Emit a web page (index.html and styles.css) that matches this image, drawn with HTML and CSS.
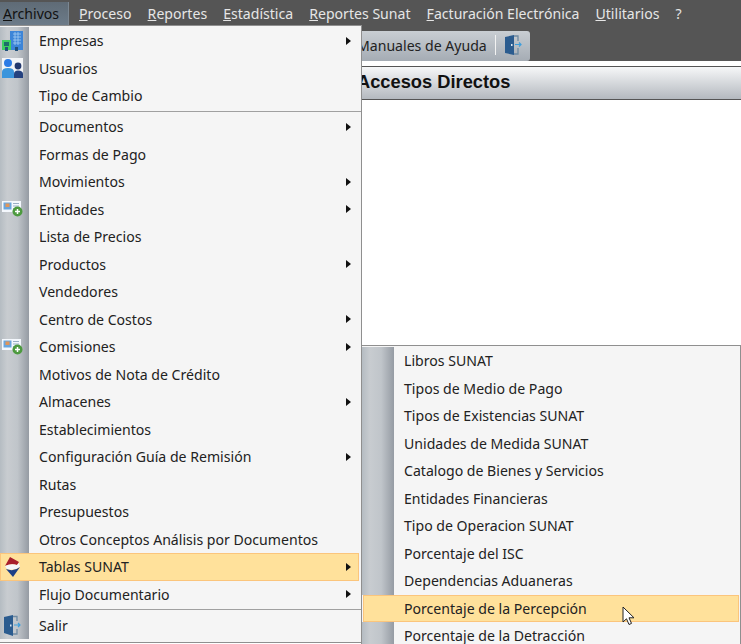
FILE: index.html
```html
<!DOCTYPE html>
<html lang="es">
<head>
    <meta charset="UTF-8">
    <meta name="viewport" content="width=device-width, initial-scale=1.0">
    <title>Accesos Directos</title>
    <link rel="stylesheet" href="styles.css">
</head>
<body>
    <div class="window">
        <nav class="menubar">
            <span class="menubar-item active"><u>A</u>rchivos</span>
            <span class="menubar-item"><u>P</u>roceso</span>
            <span class="menubar-item"><u>R</u>eportes</span>
            <span class="menubar-item"><u>E</u>stadística</span>
            <span class="menubar-item"><u>R</u>eportes Sunat</span>
            <span class="menubar-item"><u>F</u>acturación Electrónica</span>
            <span class="menubar-item"><u>U</u>tilitarios</span>
            <span class="menubar-item">?</span>
        </nav>

        <div class="toolbar">
            <div class="tool-tab">
                <span>Manuales de Ayuda</span>
                <span class="tool-sep"></span>
                <svg class="door" width="18" height="22" viewBox="0 0 18 22">
                    <path d="M1 3 L10 1 V21 L1 19 Z" fill="#2b5c8f"/>
                    <path d="M10 2 H14 V7 M14 14 V20 H10" fill="none" stroke="#6f8ba3" stroke-width="1.3"/>
                    <path d="M11 10.5 H17 M15 8.5 L17 10.5 L15 12.5" fill="none" stroke="#3e9fdc" stroke-width="1.2"/>
                    <rect x="7" y="10" width="1.5" height="2" fill="#dce8f2"/>
                </svg>
            </div>
        </div>

        <section class="panel">
            <h2 class="panel-title">Accesos Directos</h2>
            <div class="panel-body"></div>
        </section>

        <!-- menu Archivos -->
        <div class="menu menu-main">
            <div class="menu-row">
                <span class="menu-icon">
                    <svg width="21" height="20" viewBox="0 0 21 20">
                        <rect x="8" y="0" width="13" height="19" fill="#3d85d8"/>
                        <path d="M11 3 H19 M11 6 H19 M11 9 H19 M11 12 H19 M13 1 V14 M16 1 V14" stroke="#a6cdf2" stroke-width="0.8"/>
                        <rect x="0" y="9" width="9" height="10" fill="#3fd062"/>
                        <rect x="2" y="11" width="5" height="4" fill="#1c6e6a"/>
                        <rect x="3" y="16" width="3" height="4" fill="#22507a"/>
                        <rect x="13" y="16" width="3" height="4" fill="#22507a"/>
                    </svg>
                </span>
                <span class="menu-label">Empresas</span><span class="arrow"></span>
            </div>
            <div class="menu-row">
                <span class="menu-icon">
                    <svg width="21" height="20" viewBox="0 0 21 20">
                        <rect x="0" y="0" width="21" height="20" fill="#f2f4f7"/>
                        <circle cx="6" cy="5" r="4" fill="#2c7be5"/>
                        <path d="M0 20 V14 Q0 10 6 10 Q12 10 12 14 V20 Z" fill="#3b95dc"/>
                        <circle cx="16" cy="8" r="3.4" fill="#22386e"/>
                        <path d="M12 20 V16 Q12 12.5 16 12.5 Q21 12.5 21 16 V20 Z" fill="#25427f"/>
                    </svg>
                </span>
                <span class="menu-label">Usuarios</span>
            </div>
            <div class="menu-row"><span class="menu-icon"></span><span class="menu-label">Tipo de Cambio</span></div>
            <div class="menu-sep"><span class="menu-icon"></span><i></i></div>
            <div class="menu-row"><span class="menu-icon"></span><span class="menu-label">Documentos</span><span class="arrow"></span></div>
            <div class="menu-row"><span class="menu-icon"></span><span class="menu-label">Formas de Pago</span></div>
            <div class="menu-row"><span class="menu-icon"></span><span class="menu-label">Movimientos</span><span class="arrow"></span></div>
            <div class="menu-row">
                <span class="menu-icon">
                    <svg width="21" height="16" viewBox="0 0 21 16">
                        <rect x="0" y="0" width="19" height="11" fill="#f4f8fd"/>
                        <rect x="1.5" y="1.5" width="8" height="7" fill="#6aa5dc"/>
                        <rect x="3.5" y="2.5" width="4" height="3.5" fill="#e0965a"/>
                        <path d="M11 2.5 H17 M11 5 H17 M11 7.5 H17" stroke="#9ab0c6"/>
                        <circle cx="15.5" cy="10.5" r="5" fill="#4d9a3f"/>
                        <path d="M13 10.5 H18 M15.5 8 V13" stroke="#fff" stroke-width="1.5"/>
                    </svg>
                </span>
                <span class="menu-label">Entidades</span><span class="arrow"></span>
            </div>
            <div class="menu-row"><span class="menu-icon"></span><span class="menu-label">Lista de Precios</span></div>
            <div class="menu-row"><span class="menu-icon"></span><span class="menu-label">Productos</span><span class="arrow"></span></div>
            <div class="menu-row"><span class="menu-icon"></span><span class="menu-label">Vendedores</span></div>
            <div class="menu-row"><span class="menu-icon"></span><span class="menu-label">Centro de Costos</span><span class="arrow"></span></div>
            <div class="menu-row">
                <span class="menu-icon">
                    <svg width="21" height="16" viewBox="0 0 21 16">
                        <rect x="0" y="0" width="19" height="11" fill="#f4f8fd"/>
                        <rect x="1.5" y="1.5" width="8" height="7" fill="#6aa5dc"/>
                        <rect x="3.5" y="2.5" width="4" height="3.5" fill="#e0965a"/>
                        <path d="M11 2.5 H17 M11 5 H17 M11 7.5 H17" stroke="#9ab0c6"/>
                        <circle cx="15.5" cy="10.5" r="5" fill="#4d9a3f"/>
                        <path d="M13 10.5 H18 M15.5 8 V13" stroke="#fff" stroke-width="1.5"/>
                    </svg>
                </span>
                <span class="menu-label">Comisiones</span><span class="arrow"></span>
            </div>
            <div class="menu-row"><span class="menu-icon"></span><span class="menu-label">Motivos de Nota de Crédito</span></div>
            <div class="menu-row"><span class="menu-icon"></span><span class="menu-label">Almacenes</span><span class="arrow"></span></div>
            <div class="menu-row"><span class="menu-icon"></span><span class="menu-label">Establecimientos</span></div>
            <div class="menu-row"><span class="menu-icon"></span><span class="menu-label">Configuración Guía de Remisión</span><span class="arrow"></span></div>
            <div class="menu-row"><span class="menu-icon"></span><span class="menu-label">Rutas</span></div>
            <div class="menu-row"><span class="menu-icon"></span><span class="menu-label">Presupuestos</span></div>
            <div class="menu-row"><span class="menu-icon"></span><span class="menu-label">Otros Conceptos Análisis por Documentos</span></div>
            <div class="menu-row selected">
                <span class="menu-icon">
                    <svg width="16" height="20" viewBox="0 0 16 20">
                        <path d="M6 0 L15 5 L13 8 Q7 6 1 9 Z" fill="#a81f2c"/>
                        <path d="M1 9 Q7 6 13 8 L15 6 L16 10 Q10 14 3 12 Z" fill="#f4f6fa"/>
                        <path d="M2 12 Q10 15 16 10 L9 20 Z" fill="#1d3f86"/>
                    </svg>
                </span>
                <span class="menu-label">Tablas SUNAT</span><span class="arrow"></span>
            </div>
            <div class="menu-row"><span class="menu-icon"></span><span class="menu-label">Flujo Documentario</span><span class="arrow"></span></div>
            <div class="menu-sep"><span class="menu-icon"></span><i></i></div>
            <div class="menu-row">
                <span class="menu-icon">
                    <svg width="17" height="21" viewBox="0 0 17 21">
                        <path d="M0 2 L9 0 V21 L0 18 Z" fill="#2b5c8f"/>
                        <path d="M9 1.5 H13 V6 M13 14 V19 H9" fill="none" stroke="#6f8ba3" stroke-width="1.3"/>
                        <path d="M10 10 H16 M14 8 L16 10 L14 12" fill="none" stroke="#3e9fdc" stroke-width="1.2"/>
                        <rect x="6" y="9.5" width="1.5" height="2" fill="#dce8f2"/>
                    </svg>
                </span>
                <span class="menu-label">Salir</span>
            </div>
        </div>

        <!-- submenu Tablas SUNAT -->
        <div class="menu menu-sub">
            <div class="menu-row"><span class="menu-icon"></span><span class="menu-label">Libros SUNAT</span></div>
            <div class="menu-row"><span class="menu-icon"></span><span class="menu-label">Tipos de Medio de Pago</span></div>
            <div class="menu-row"><span class="menu-icon"></span><span class="menu-label">Tipos de Existencias SUNAT</span></div>
            <div class="menu-row"><span class="menu-icon"></span><span class="menu-label">Unidades de Medida SUNAT</span></div>
            <div class="menu-row"><span class="menu-icon"></span><span class="menu-label">Catalogo de Bienes y Servicios</span></div>
            <div class="menu-row"><span class="menu-icon"></span><span class="menu-label">Entidades Financieras</span></div>
            <div class="menu-row"><span class="menu-icon"></span><span class="menu-label">Tipo de Operacion SUNAT</span></div>
            <div class="menu-row"><span class="menu-icon"></span><span class="menu-label">Porcentaje del ISC</span></div>
            <div class="menu-row"><span class="menu-icon"></span><span class="menu-label">Dependencias Aduaneras</span></div>
            <div class="menu-row selected"><span class="menu-icon"></span><span class="menu-label">Porcentaje de la Percepción</span></div>
            <div class="menu-row"><span class="menu-icon"></span><span class="menu-label">Porcentaje de la Detracción</span></div>
        </div>

        <svg class="cursor" width="16" height="22" viewBox="0 0 16 22">
            <path d="M1 1 V16 L4.5 12.8 L7 18.5 L9.5 17.4 L7 11.8 L12 11.8 Z" fill="#fff" stroke="#222" stroke-width="1"/>
        </svg>
    </div>
</body>
</html>
```

FILE: styles.css
```css
html, body {
    margin: 0;
    padding: 0;
}
.window {
    position: relative;
    width: 741px;
    height: 644px;
    overflow: hidden;
    background: #fff;
    font-family: "Noto Sans", sans-serif;
    font-size: 14.1px;
    color: #222;
}
.menubar {
    display: flex;
    height: 31px;
    box-sizing: border-box;
    padding-top: 2px;
    background: #555;
    color: #e6e6e6;
}
.menubar-item {
    height: 24px;
    line-height: 24px;
    padding: 0 8px;
}
.menubar-item.active {
    width: 69px;
    box-sizing: border-box;
    margin-right: 2px;
    padding: 0 0 0 3px;
    background: linear-gradient(#5f6b76, #6d7c8a);
    color: #111;
    border-right: 1px solid #7b8792;
}
.toolbar {
    display: flex;
    height: 30px;
    background: #555;
}
.tool-tab {
    display: flex;
    align-items: center;
    width: 530px;
    box-sizing: border-box;
    padding: 0 0 2px 357px;
    background: linear-gradient(#c9ced3, #a5acb4);
    border-radius: 0 3px 3px 0;
}
.tool-sep {
    width: 1px;
    height: 20px;
    margin: 0 8px 0 8px;
    background: #f2f2f2;
}
.panel {
    padding-top: 5px;
}
.panel-title {
    margin: 0;
    height: 34px;
    box-sizing: border-box;
    padding-left: 357px;
    line-height: 29px;
    font-family: "Liberation Sans", sans-serif;
    font-size: 18.3px;
    font-weight: bold;
    color: #111;
    border-top: 1px solid #555;
    border-bottom: 1px solid #555;
    background: linear-gradient(#f6f7f8, #b4b9bf);
}
.panel-body {
    height: 240px;
}
.menu {
    position: absolute;
    box-sizing: border-box;
    background: #f5f5f5;
    border: 1px solid #8f8f8f;
}
.menu-main {
    left: -1px;
    top: 25px;
    width: 363px;
    height: 618px;
    padding-top: 1px;
}
.menu-sub {
    left: 361px;
    top: 345px;
    width: 380px;
    height: 299px;
    padding-top: 1px;
    border-bottom: none;
}
.menu-row {
    display: flex;
    align-items: center;
    height: 27.5px;
}
.menu-icon {
    flex: none;
    display: flex;
    align-items: center;
    justify-content: center;
    width: 29px;
    box-sizing: border-box;
    padding-right: 5px;
    align-self: stretch;
    background: linear-gradient(90deg, #b5bcc2, #c8ccd0 25%, #c0c5ca 60%, #959ba3);
}
.menu-sub .menu-icon {
    width: 32px;
}
.menu-label {
    flex: 1;
    padding-left: 10px;
}
.menu-sep {
    display: flex;
    align-items: center;
    height: 3.5px;
}
.menu-sep .menu-icon {
    height: 100%;
}
.menu-sep i {
    flex: 1;
    height: 1px;
    margin-left: 10px;
    background: #a0a0a0;
}
.menu-row.selected {
    margin-right: 2px;
    background: #ffe19b;
    box-shadow: inset 0 0 0 1px #fbc57c;
}
.menu-row.selected .menu-icon {
    background: none;
}
.menu-row.selected .arrow {
    margin-right: 8px;
}
.menu-sub .menu-row.selected {
    margin: 0 1px;
}
.menu-sub .menu-row.selected .menu-icon {
    width: 31px;
}
.arrow {
    width: 0;
    height: 0;
    margin-right: 10px;
    border-left: 5px solid #111;
    border-top: 4px solid transparent;
    border-bottom: 4px solid transparent;
}
.cursor {
    position: absolute;
    left: 622px;
    top: 606px;
}
```
